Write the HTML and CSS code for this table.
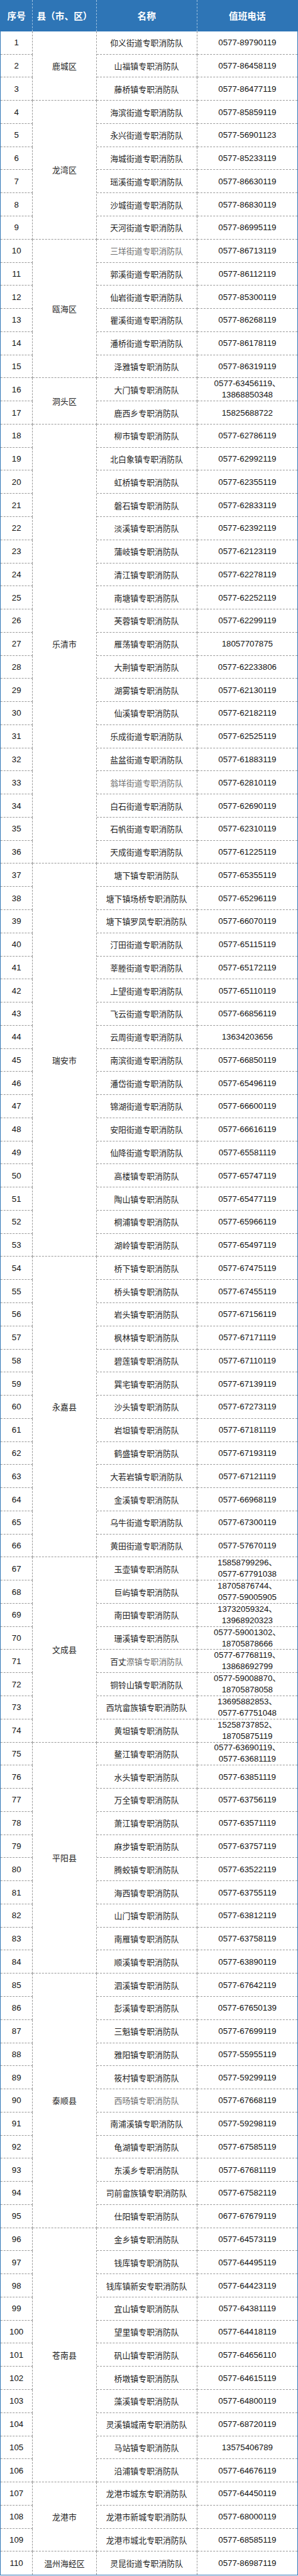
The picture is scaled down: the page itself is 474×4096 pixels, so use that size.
FILE: index.html
```html
<!DOCTYPE html>
<html lang="zh-CN">
<head>
<meta charset="utf-8">
<title>温州市专职消防队值班电话</title>
<link rel="stylesheet" href="styles.css">
</head>
<body>
<div class="sheet">
<div class="hd">序号</div><div class="hd">县（市、区）</div><div class="hd">名称</div><div class="hd last">值班电话</div>

<div class="no">1</div><div class="area s3">鹿城区</div><div class="nm">仰义街道专职消防队</div><div class="ph">0577-89790119</div>
<div class="no">2</div><div class="nm">山福镇专职消防队</div><div class="ph">0577-86458119</div>
<div class="no">3</div><div class="nm">藤桥镇专职消防队</div><div class="ph">0577-86477119</div>

<div class="no">4</div><div class="area s6">龙湾区</div><div class="nm">海滨街道专职消防队</div><div class="ph">0577-85859119</div>
<div class="no">5</div><div class="nm">永兴街道专职消防队</div><div class="ph">0577-56901123</div>
<div class="no">6</div><div class="nm">海城街道专职消防队</div><div class="ph">0577-85233119</div>
<div class="no">7</div><div class="nm">瑶溪街道专职消防队</div><div class="ph">0577-86630119</div>
<div class="no">8</div><div class="nm">沙城街道专职消防队</div><div class="ph">0577-86830119</div>
<div class="no">9</div><div class="nm">天河街道专职消防队</div><div class="ph">0577-86995119</div>

<div class="no">10</div><div class="area s6">瓯海区</div><div class="nm dim">三垟街道专职消防队</div><div class="ph">0577-86713119</div>
<div class="no">11</div><div class="nm">郭溪街道专职消防队</div><div class="ph">0577-86112119</div>
<div class="no">12</div><div class="nm">仙岩街道专职消防队</div><div class="ph">0577-85300119</div>
<div class="no">13</div><div class="nm">瞿溪街道专职消防队</div><div class="ph">0577-86268119</div>
<div class="no">14</div><div class="nm">潘桥街道专职消防队</div><div class="ph">0577-86178119</div>
<div class="no">15</div><div class="nm">泽雅镇专职消防队</div><div class="ph">0577-86319119</div>

<div class="no">16</div><div class="area s2">洞头区</div><div class="nm">大门镇专职消防队</div><div class="ph two"><span>0577-63456119、</span><span>13868850348</span></div>
<div class="no">17</div><div class="nm">鹿西乡专职消防队</div><div class="ph">15825688722</div>

<div class="no">18</div><div class="area s19">乐清市</div><div class="nm">柳市镇专职消防队</div><div class="ph">0577-62786119</div>
<div class="no">19</div><div class="nm">北白象镇专职消防队</div><div class="ph">0577-62992119</div>
<div class="no">20</div><div class="nm">虹桥镇专职消防队</div><div class="ph">0577-62355119</div>
<div class="no">21</div><div class="nm">磐石镇专职消防队</div><div class="ph">0577-62833119</div>
<div class="no">22</div><div class="nm">淡溪镇专职消防队</div><div class="ph">0577-62392119</div>
<div class="no">23</div><div class="nm">蒲岐镇专职消防队</div><div class="ph">0577-62123119</div>
<div class="no">24</div><div class="nm">清江镇专职消防队</div><div class="ph">0577-62278119</div>
<div class="no">25</div><div class="nm">南塘镇专职消防队</div><div class="ph">0577-62252119</div>
<div class="no">26</div><div class="nm">芙蓉镇专职消防队</div><div class="ph">0577-62299119</div>
<div class="no">27</div><div class="nm">雁荡镇专职消防队</div><div class="ph">18057707875</div>
<div class="no">28</div><div class="nm">大荆镇专职消防队</div><div class="ph">0577-62233806</div>
<div class="no">29</div><div class="nm">湖雾镇专职消防队</div><div class="ph">0577-62130119</div>
<div class="no">30</div><div class="nm">仙溪镇专职消防队</div><div class="ph">0577-62182119</div>
<div class="no">31</div><div class="nm">乐成街道专职消防队</div><div class="ph">0577-62525119</div>
<div class="no">32</div><div class="nm">盐盆街道专职消防队</div><div class="ph">0577-61883119</div>
<div class="no">33</div><div class="nm dim">翁垟街道专职消防队</div><div class="ph">0577-62810119</div>
<div class="no">34</div><div class="nm">白石街道专职消防队</div><div class="ph">0577-62690119</div>
<div class="no">35</div><div class="nm">石帆街道专职消防队</div><div class="ph">0577-62310119</div>
<div class="no">36</div><div class="nm">天成街道专职消防队</div><div class="ph">0577-61225119</div>

<div class="no">37</div><div class="area s17">瑞安市</div><div class="nm">塘下镇专职消防队</div><div class="ph">0577-65355119</div>
<div class="no">38</div><div class="nm">塘下镇场桥专职消防队</div><div class="ph">0577-65296119</div>
<div class="no">39</div><div class="nm">塘下镇罗凤专职消防队</div><div class="ph">0577-66070119</div>
<div class="no">40</div><div class="nm">汀田街道专职消防队</div><div class="ph">0577-65115119</div>
<div class="no">41</div><div class="nm">莘塍街道专职消防队</div><div class="ph">0577-65172119</div>
<div class="no">42</div><div class="nm">上望街道专职消防队</div><div class="ph">0577-65110119</div>
<div class="no">43</div><div class="nm">飞云街道专职消防队</div><div class="ph">0577-66856119</div>
<div class="no">44</div><div class="nm">云周街道专职消防队</div><div class="ph">13634203656</div>
<div class="no">45</div><div class="nm">南滨街道专职消防队</div><div class="ph">0577-66850119</div>
<div class="no">46</div><div class="nm">潘岱街道专职消防队</div><div class="ph">0577-65496119</div>
<div class="no">47</div><div class="nm">锦湖街道专职消防队</div><div class="ph">0577-66600119</div>
<div class="no">48</div><div class="nm">安阳街道专职消防队</div><div class="ph">0577-66616119</div>
<div class="no">49</div><div class="nm">仙降街道专职消防队</div><div class="ph">0577-65581119</div>
<div class="no">50</div><div class="nm">高楼镇专职消防队</div><div class="ph">0577-65747119</div>
<div class="no">51</div><div class="nm">陶山镇专职消防队</div><div class="ph">0577-65477119</div>
<div class="no">52</div><div class="nm">桐浦镇专职消防队</div><div class="ph">0577-65966119</div>
<div class="no">53</div><div class="nm">湖岭镇专职消防队</div><div class="ph">0577-65497119</div>

<div class="no">54</div><div class="area s13">永嘉县</div><div class="nm">桥下镇专职消防队</div><div class="ph">0577-67475119</div>
<div class="no">55</div><div class="nm">桥头镇专职消防队</div><div class="ph">0577-67455119</div>
<div class="no">56</div><div class="nm">岩头镇专职消防队</div><div class="ph">0577-67156119</div>
<div class="no">57</div><div class="nm">枫林镇专职消防队</div><div class="ph">0577-67171119</div>
<div class="no">58</div><div class="nm">碧莲镇专职消防队</div><div class="ph">0577-67110119</div>
<div class="no">59</div><div class="nm">巽宅镇专职消防队</div><div class="ph">0577-67139119</div>
<div class="no">60</div><div class="nm">沙头镇专职消防队</div><div class="ph">0577-67273119</div>
<div class="no">61</div><div class="nm">岩坦镇专职消防队</div><div class="ph">0577-67181119</div>
<div class="no">62</div><div class="nm">鹤盛镇专职消防队</div><div class="ph">0577-67193119</div>
<div class="no">63</div><div class="nm">大若岩镇专职消防队</div><div class="ph">0577-67121119</div>
<div class="no">64</div><div class="nm">金溪镇专职消防队</div><div class="ph">0577-66968119</div>
<div class="no">65</div><div class="nm">乌牛街道专职消防队</div><div class="ph">0577-67300119</div>
<div class="no">66</div><div class="nm">黄田街道专职消防队</div><div class="ph">0577-57670119</div>

<div class="no">67</div><div class="area s8">文成县</div><div class="nm">玉壶镇专职消防队</div><div class="ph two"><span>15858799296、</span><span>0577-67791038</span></div>
<div class="no">68</div><div class="nm">巨屿镇专职消防队</div><div class="ph two"><span>18705876744、</span><span>0577-59005905</span></div>
<div class="no">69</div><div class="nm">南田镇专职消防队</div><div class="ph two"><span>13732059324、</span><span>13968920323</span></div>
<div class="no">70</div><div class="nm">珊溪镇专职消防队</div><div class="ph two"><span>0577-59001302、</span><span>18705878666</span></div>
<div class="no">71</div><div class="nm"><span>百丈<span class="dimtxt">漈镇专职消防队</span></span></div><div class="ph two"><span>0577-67768119、</span><span>13868692799</span></div>
<div class="no">72</div><div class="nm">铜铃山镇专职消防队</div><div class="ph two"><span>0577-59008870、</span><span>18705878058</span></div>
<div class="no">73</div><div class="nm">西坑畲族镇专职消防队</div><div class="ph two"><span>13695882853、</span><span>0577-67751048</span></div>
<div class="no">74</div><div class="nm">黄坦镇专职消防队</div><div class="ph two"><span>15258737852、</span><span>18705875119</span></div>

<div class="no">75</div><div class="area s10">平阳县</div><div class="nm">鳌江镇专职消防队</div><div class="ph two"><span>0577-63690119、</span><span>0577-63681119</span></div>
<div class="no">76</div><div class="nm">水头镇专职消防队</div><div class="ph">0577-63851119</div>
<div class="no">77</div><div class="nm">万全镇专职消防队</div><div class="ph">0577-63756119</div>
<div class="no">78</div><div class="nm">萧江镇专职消防队</div><div class="ph">0577-63571119</div>
<div class="no">79</div><div class="nm">麻步镇专职消防队</div><div class="ph">0577-63757119</div>
<div class="no">80</div><div class="nm">腾蛟镇专职消防队</div><div class="ph">0577-63522119</div>
<div class="no">81</div><div class="nm">海西镇专职消防队</div><div class="ph">0577-63755119</div>
<div class="no">82</div><div class="nm">山门镇专职消防队</div><div class="ph">0577-63812119</div>
<div class="no">83</div><div class="nm">南雁镇专职消防队</div><div class="ph">0577-63758119</div>
<div class="no">84</div><div class="nm">顺溪镇专职消防队</div><div class="ph">0577-63890119</div>

<div class="no">85</div><div class="area s11">泰顺县</div><div class="nm">泗溪镇专职消防队</div><div class="ph">0577-67642119</div>
<div class="no">86</div><div class="nm">彭溪镇专职消防队</div><div class="ph">0577-67650139</div>
<div class="no">87</div><div class="nm">三魁镇专职消防队</div><div class="ph">0577-67699119</div>
<div class="no">88</div><div class="nm">雅阳镇专职消防队</div><div class="ph">0577-55955119</div>
<div class="no">89</div><div class="nm">筱村镇专职消防队</div><div class="ph">0577-59299119</div>
<div class="no">90</div><div class="nm dim">西旸镇专职消防队</div><div class="ph">0577-67668119</div>
<div class="no">91</div><div class="nm">南浦溪镇专职消防队</div><div class="ph">0577-59298119</div>
<div class="no">92</div><div class="nm">龟湖镇专职消防队</div><div class="ph">0577-67585119</div>
<div class="no">93</div><div class="nm">东溪乡专职消防队</div><div class="ph">0577-67681119</div>
<div class="no">94</div><div class="nm">司前畲族镇专职消防队</div><div class="ph">0577-67582119</div>
<div class="no">95</div><div class="nm">仕阳镇专职消防队</div><div class="ph">0677-67679119</div>

<div class="no">96</div><div class="area s11">苍南县</div><div class="nm">金乡镇专职消防队</div><div class="ph">0577-64573119</div>
<div class="no">97</div><div class="nm">钱库镇专职消防队</div><div class="ph">0577-64495119</div>
<div class="no">98</div><div class="nm">钱库镇新安专职消防队</div><div class="ph">0577-64423119</div>
<div class="no">99</div><div class="nm">宜山镇专职消防队</div><div class="ph">0577-64381119</div>
<div class="no">100</div><div class="nm">望里镇专职消防队</div><div class="ph">0577-64418119</div>
<div class="no">101</div><div class="nm">矾山镇专职消防队</div><div class="ph">0577-64656110</div>
<div class="no">102</div><div class="nm">桥墩镇专职消防队</div><div class="ph">0577-64615119</div>
<div class="no">103</div><div class="nm">藻溪镇专职消防队</div><div class="ph">0577-64800119</div>
<div class="no">104</div><div class="nm">灵溪镇城南专职消防队</div><div class="ph">0577-68720119</div>
<div class="no">105</div><div class="nm">马站镇专职消防队</div><div class="ph">13575406789</div>
<div class="no">106</div><div class="nm">沿浦镇专职消防队</div><div class="ph">0577-64676119</div>

<div class="no">107</div><div class="area s3">龙港市</div><div class="nm">龙港市城东专职消防队</div><div class="ph">0577-64450119</div>
<div class="no">108</div><div class="nm">龙港市新城专职消防队</div><div class="ph">0577-68000119</div>
<div class="no">109</div><div class="nm">龙港市城北专职消防队</div><div class="ph">0577-68585119</div>

<div class="no end">110</div><div class="area end">温州海经区</div><div class="nm end">灵昆街道专职消防队</div><div class="ph end">0577-86987119</div>
</div>
</body>
</html>
```

FILE: styles.css
```css
html, body {
  margin: 0;
  padding: 0;
  background: #ffffff;
}

.sheet {
  box-sizing: border-box;
  width: 474px;
  display: grid;
  grid-template-columns: 51.3px 101.3px 160.1px 1fr;
  grid-template-rows: 49.9px;
  grid-auto-rows: 36.77px;
  border-left: 1px solid #2e75b6;
  border-right: 1px solid #2e75b6;
  border-bottom: 1px solid #2e75b6;
  font-family: "Noto Sans CJK SC", "Liberation Sans", sans-serif;
  color: #1a1a1a;
}

.sheet > div {
  box-sizing: border-box;
  display: flex;
  flex-direction: column;
  align-items: center;
  justify-content: center;
  text-align: center;
  white-space: nowrap;
  border-right: 1px dashed #9a9a9a;
  border-bottom: 1px dashed #9a9a9a;
}

.sheet > .hd {
  background: #2e75b6;
  color: #ffffff;
  font-weight: 700;
  font-size: 14.7px;
  letter-spacing: 0;
  border-bottom: none;
  border-right: 1px dashed rgba(255, 255, 255, 0.55);
}

.sheet > .hd.last,
.sheet > .ph {
  border-right: none;
}

.sheet > .end {
  border-bottom: none;
}

.no,
.ph {
  font-family: "Liberation Sans", "Noto Sans CJK SC", sans-serif;
  font-size: 13.3px;
  color: #111111;
}

.ph.two {
  line-height: 18px;
}

.nm,
.area {
  font-size: 12.9px;
  color: #1f1f1f;
}

.nm.dim,
.dimtxt {
  color: #6e6e6e;
}

.s2 { grid-row: span 2; }
.s3 { grid-row: span 3; }
.s6 { grid-row: span 6; }
.s8 { grid-row: span 8; }
.s10 { grid-row: span 10; }
.s11 { grid-row: span 11; }
.s13 { grid-row: span 13; }
.s17 { grid-row: span 17; }
.s19 { grid-row: span 19; }
```
